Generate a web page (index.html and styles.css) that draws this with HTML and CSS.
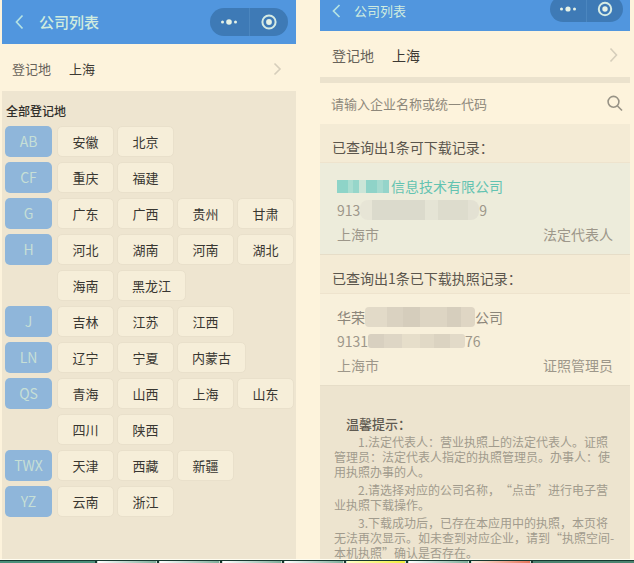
FILE: index.html
```html
<!DOCTYPE html>
<html lang="zh-CN">
<head>
<meta charset="utf-8">
<meta name="viewport" content="width=device-width, initial-scale=1">
<title>公司列表</title>
<link rel="stylesheet" href="styles.css">
</head>
<body>
<main class="screens">
  <section class="phone phone-regions">
    <header class="bar">
      <button class="back" aria-label="返回"><svg width="9" height="16" viewBox="0 0 9 16"><path d="M7.5 1.5 1.5 8l6 6.5"/></svg></button>
      <h1 class="title">公司列表</h1>
      <div class="capsule">
        <button aria-label="更多"><svg width="18" height="8" viewBox="0 0 18 8"><circle cx="2.5" cy="4" r="1.5"/><circle cx="9" cy="4" r="2.8"/><circle cx="15.5" cy="4" r="1.5"/></svg></button>
        <button aria-label="关闭"><svg width="18" height="18" viewBox="0 0 18 18"><circle class="ring" cx="9" cy="9" r="6.6"/><circle cx="9" cy="9" r="2.9"/></svg></button>
      </div>
    </header>
    <button class="place"><span class="place-label">登记地</span><span class="place-value">上海</span><svg class="chevron" width="9" height="14" viewBox="0 0 9 14"><path d="M1.5 1.5 7 7l-5.5 5.5"/></svg></button>
    <div class="regions">
      <h2 class="regions-title">全部登记地</h2>
      <div class="group"><span class="letter">AB</span><div class="chips"><button>安徽</button><button>北京</button></div></div>
      <div class="group"><span class="letter">CF</span><div class="chips"><button>重庆</button><button>福建</button></div></div>
      <div class="group"><span class="letter">G</span><div class="chips"><button>广东</button><button>广西</button><button>贵州</button><button>甘肃</button></div></div>
      <div class="group"><span class="letter">H</span><div class="chips"><button>河北</button><button>湖南</button><button>河南</button><button>湖北</button><button>海南</button><button>黑龙江</button></div></div>
      <div class="group"><span class="letter">J</span><div class="chips"><button>吉林</button><button>江苏</button><button>江西</button></div></div>
      <div class="group"><span class="letter">LN</span><div class="chips"><button>辽宁</button><button>宁夏</button><button>内蒙古</button></div></div>
      <div class="group"><span class="letter">QS</span><div class="chips"><button>青海</button><button>山西</button><button>上海</button><button>山东</button><button>四川</button><button>陕西</button></div></div>
      <div class="group"><span class="letter">TWX</span><div class="chips"><button>天津</button><button>西藏</button><button>新疆</button></div></div>
      <div class="group"><span class="letter">YZ</span><div class="chips"><button>云南</button><button>浙江</button></div></div>
    </div>
  </section>

  <section class="phone phone-companies">
    <header class="bar">
      <button class="back" aria-label="返回"><svg width="9" height="16" viewBox="0 0 9 16"><path d="M7.5 2 1.5 8l6 6"/></svg></button>
      <h1 class="title">公司列表</h1>
      <div class="capsule">
        <button aria-label="更多"><svg width="18" height="8" viewBox="0 0 18 8"><circle cx="2.5" cy="4" r="1.5"/><circle cx="9" cy="4" r="2.6"/><circle cx="15.5" cy="4" r="1.5"/></svg></button>
        <button aria-label="关闭"><svg width="18" height="18" viewBox="0 0 18 18"><circle class="ring" cx="9" cy="9" r="6.2"/><circle cx="9" cy="9" r="2.7"/></svg></button>
      </div>
    </header>
    <button class="place"><span class="place-label">登记地</span><span class="place-value">上海</span><svg class="chevron" width="9" height="16" viewBox="0 0 9 16"><path d="M1.5 1.5 7.5 8l-6 6.5"/></svg></button>
    <form class="search">
      <input type="text" aria-label="企业名称或统一代码" placeholder="请输入企业名称或统一代码">
      <button type="button" aria-label="搜索"><svg width="16" height="17" viewBox="0 0 16 17"><circle cx="6.5" cy="6.8" r="5.4"/><path d="m10.5 11 4.5 4.500"/></svg></button>
    </form>
    <h2 class="list-title">已查询出1条可下载记录：</h2>
    <article class="record record-new">
      <a class="name" href="#"><span class="mask mask-name"></span>信息技术有限公司</a>
      <p class="code">913<span class="mask mask-code"></span>9</p>
      <p class="meta"><span>上海市</span><span>法定代表人</span></p>
    </article>
    <h2 class="list-title">已查询出1条已下载执照记录：</h2>
    <article class="record">
      <a class="name" href="#">华荣<span class="mask mask-company"></span>公司</a>
      <p class="code">9131<span class="mask mask-number"></span>76</p>
      <p class="meta"><span>上海市</span><span>证照管理员</span></p>
    </article>
    <div class="tips">
      <h3>温馨提示：</h3>
      <p>1.法定代表人：营业执照上的法定代表人。证照管理员：法定代表人指定的执照管理员。办事人：使用执照办事的人。</p>
      <p>2.请选择对应的公司名称，“点击”进行电子营业执照下载操作。</p>
      <p>3.下载成功后，已存在本应用中的执照，本页将无法再次显示。如未查到对应企业，请到“执照空间-本机执照”确认是否存在。</p>
    </div>
  </section>
</main>
<footer class="tabs">
  <i class="lead"></i><i></i><i></i><i></i><i></i><i class="yellow"></i><i></i><i class="coral"></i><i class="rest"></i>
</footer>
</body>
</html>
```
FILE: styles.css
```css
* { box-sizing: border-box; }

body {
  margin: 0;
  height: 100vh;
  display: flex;
  flex-direction: column;
  overflow: hidden;
  background: #fdf3dc;
  color: #4c4840;
  font-family: "Noto Sans CJK SC", sans-serif;
  font-size: 14px;
  text-spacing-trim: space-all;
}

h1, h2, h3, p { margin: 0; font-weight: 400; }

button, input {
  margin: 0;
  padding: 0;
  border: 0;
  background: none;
  color: inherit;
  font: inherit;
}

svg { display: block; }

.screens {
  flex: 1;
  min-height: 0;
  display: grid;
  grid-template-columns: 294fr 310fr;
  gap: 24px;
  padding: 0 4px 0 2px;
}

.phone {
  display: flex;
  flex-direction: column;
  min-width: 0;
  min-height: 0;
}

/* Title bar */
.bar {
  flex: none;
  display: flex;
  align-items: center;
  height: 44px;
  padding: 0 8px 0 13px;
  background: #5196de;
  color: #d0ecde;
}
.back path { fill: none; stroke: #b5e3e3; stroke-width: 1.7; }
.title { margin-left: 15px; font-size: 15px; line-height: 22px; font-weight: 500; }
.capsule {
  display: flex;
  width: 78px;
  height: 28px;
  margin-left: auto;
  border-radius: 14px;
  background: #3e7ab6;
}
.capsule button {
  flex: 1;
  display: flex;
  align-items: center;
  justify-content: center;
}
.capsule button + button { border-left: 1px solid #4b86bf; }
.capsule circle { fill: #e6f2e6; }
.capsule .ring { fill: none; stroke: #d5ebe4; stroke-width: 2; }

.phone-companies .bar {
  align-items: flex-end;
  height: 31px;
  padding: 0 7px 9px 12px;
}
.phone-companies .back { padding-bottom: 3px; }
.phone-companies .title { margin-left: 13px; font-size: 13px; font-weight: 400; }
.phone-companies .capsule { width: 73px; height: 26px; }

/* Selected place */
.place {
  flex: none;
  display: flex;
  align-items: center;
  height: 47px;
  padding: 2px 14px 0 10px;
  font-size: 13px;
  color: #67625a;
}
.place-value { margin-left: 18px; color: #3c3933; }
.chevron { margin-left: auto; }
.chevron path { fill: none; stroke: #d6cebb; stroke-width: 1.6; }
.phone-companies .place { height: 46px; padding: 2px 12px 0; font-size: 14px; }

/* Region picker */
.regions {
  flex: 1;
  padding: 10px 0 0 3px;
  background: #eee5d0;
}
.regions-title {
  margin: 0 0 5px 1px;
  font-size: 12px;
  line-height: 20px;
  font-weight: 500;
  color: #312f2b;
}
.group {
  display: flex;
  align-items: flex-start;
  gap: 5px;
  margin-bottom: 5px;
}
.letter {
  flex: none;
  width: 47px;
  height: 31px;
  border-radius: 5px;
  background: #8fb6da;
  color: #c6dfd6;
  font-size: 14px;
  line-height: 31px;
  text-align: center;
}
.chips {
  flex: 1;
  display: flex;
  flex-wrap: wrap;
  gap: 5px 3px;
}
.chips button {
  height: 31px;
  padding: 0 14px;
  border: 1px solid #e9e0cb;
  border-radius: 5px;
  background: #f6eed9;
  color: #383631;
  font-size: 13px;
  min-width: 57px;
}

/* Search */
.search {
  flex: none;
  display: flex;
  align-items: center;
  height: 47px;
  padding: 0 7px 0 11px;
  border-top: 6px solid #ebe2cd;
}
.search input { flex: 1; min-width: 0; outline: 0; font-size: 13px; }
.search input::placeholder { color: #8e887b; opacity: 1; }
.search svg { fill: none; stroke: #989386; stroke-width: 1.6; }

/* Company records */
.list-title {
  flex: none;
  height: 39px;
  padding-left: 12px;
  border-bottom: 1px solid #eee3cd;
  background: #f4ebd5;
  color: #5b564d;
  font-size: 14px;
  line-height: 46px;
}
.record {
  flex: none;
  height: 92px;
  padding: 11px 17px 8px;
  border-bottom: 1px solid #e6ddc8;
  background: #f8f0db;
  color: #9d978a;
  line-height: 24px;
}
.record-new { background: #edecdb; }
.name {
  display: flex;
  align-items: center;
  color: #8c867a;
  text-decoration: none;
}
.record-new .name { color: #63c3b1; }
.code { display: flex; align-items: center; }
.meta { display: flex; justify-content: space-between; }

/* Redacted parts of a record */
.mask { flex: none; }
.mask-name {
  width: 52px;
  height: 13px;
  margin-right: 2px;
  background: linear-gradient(90deg, #8ed4c8 0 11px, #a9ddd0 11px 16px, #96d6ca 16px 22px, #cbe5d7 22px 29px, #8fd3c8 29px 40px, #a5dacf 40px 46px, #94d4ca 46px);
}
.mask-code {
  width: 119px;
  height: 20px;
  border-radius: 8px;
  background: linear-gradient(90deg, #e7e5d6 0 12px, #dbdacc 12px 65px, #e5e4d5 65px 78px, #dddccd 78px 108px, #e3e1d3 108px);
}
.mask-company {
  width: 110px;
  height: 20px;
  border-radius: 4px;
  background: linear-gradient(90deg, #e2dac8 0 22px, #dad2c1 22px 38px, #d5cdbc 38px 55px, #ddd5c3 55px 82px, #d6cebd 82px 96px, #dfd6c4 96px);
}
.mask-number {
  width: 97px;
  height: 14px;
  border-radius: 3px;
  background: linear-gradient(90deg, #d8d0c0 0 16px, #ded6c5 16px 34px, #e6deca 34px 52px, #e1d9c6 52px 66px, #dbd3c1 66px 82px, #e2dac8 82px);
}

/* Tips */
.tips {
  flex: 1;
  padding: 27px 14px 0;
  background: #ede4cf;
  color: #a19b8d;
  font-size: 12px;
  line-height: 15px;
}
.tips h3 {
  padding-left: 12px;
  color: #5f5a51;
  font-size: 13px;
  line-height: 21px;
  font-weight: 500;
}
.tips p { margin-bottom: 3px; text-indent: 24px; }
.tips p:last-child { margin-bottom: 0; }

/* Sheet tabs under the screens */
.tabs {
  flex: none;
  display: flex;
  gap: 2px;
  height: 4px;
  border-top: 1px solid #fffdf0;
  background: #17382f;
  padding-top: 1px;
}
.tabs i {
  flex: 60;
  border: 1px solid #c9e0d3;
  border-width: 0 1px;
  background: linear-gradient(90deg, #fff, #7fae9b);
}
.tabs .lead { flex: 98; border: 0; background: #4b8f7b; }
.tabs .yellow { background: linear-gradient(90deg, #ffffc8, #f2ef3c); }
.tabs .coral { background: linear-gradient(90deg, #ffe6dc, #e7745a); }
.tabs .rest { flex: 104; border: 0; background: #4b8370; }
```
